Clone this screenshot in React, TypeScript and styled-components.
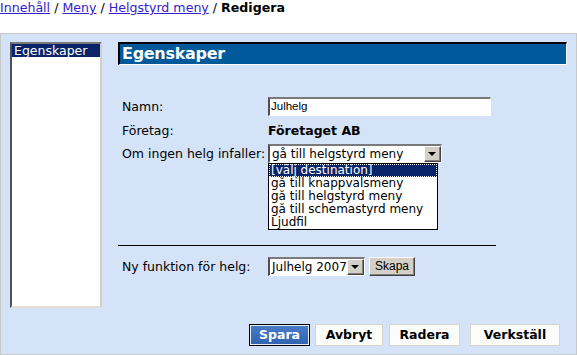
import React from "react";
import styled, { createGlobalStyle } from "styled-components";

const Global = createGlobalStyle`
  html, body { margin: 0; padding: 0; background: #ffffff; }
  body { font-family: "DejaVu Sans", Verdana, sans-serif; font-size: 12.5px; color: #000; }
`;

const Page = styled.div`
  width: 577px;
  height: 355px;
  overflow: hidden;
`;

const Crumbs = styled.div`
  height: 33px;
  line-height: 16px;
  font-size: 12.6px;
  white-space: nowrap;
`;

const Link = styled.a`
  color: #3322cc;
  text-decoration: underline;
`;

const Sep = styled.span`
  color: #000;
`;

const Current = styled.b`
  font-weight: bold;
`;

const Panel = styled.div`
  box-sizing: border-box;
  width: 577px;
  height: 322px;
  background: #d4e3f8;
  border: 1px solid #c8c8c8;
  display: flex;
  padding: 8px 9px 0 9px;
  position: relative;
`;

const ListBox = styled.div`
  box-sizing: border-box;
  width: 92px;
  height: 266px;
  background: #fff;
  border-top: 2px solid #7a7a7a;
  border-left: 2px solid #505050;
  border-right: 2px solid #d4d0c8;
  border-bottom: 2px solid #e4e0d8;
  flex: none;
`;

const ListItem = styled.div<{ $selected?: boolean }>`
  height: 13px;
  line-height: 13px;
  padding-left: 2px;
  font-size: 12.5px;
  color: ${(p) => (p.$selected ? "#fff" : "#000")};
  background: ${(p) => (p.$selected ? "#0a246a" : "transparent")};
`;

const Main = styled.div`
  margin-left: 16px;
  width: 450px;
  display: flex;
  flex-direction: column;
  position: relative;
`;

const Header = styled.div`
  box-sizing: border-box;
  height: 23px;
  background: #00599a;
  border-top: 2px solid #000;
  border-left: 2px solid #000;
  border-right: 1px solid #fff;
  border-bottom: 1px solid #fff;
  color: #fff;
  font-weight: bold;
  font-size: 16px;
  letter-spacing: -0.3px;
  line-height: 19px;
  padding-left: 2px;
`;

const Form = styled.div`
  margin-top: 32px;
  display: grid;
  grid-template-columns: 146px 1fr;
  padding-left: 4px;
  position: relative;
`;

const Label = styled.div<{ $h: number }>`
  height: ${(p) => p.$h}px;
  display: flex;
  align-items: center;
  white-space: nowrap;
`;

const Cell = styled.div<{ $h: number }>`
  height: ${(p) => p.$h}px;
  display: flex;
  align-items: center;
  position: relative;
`;

const TextInput = styled.div`
  box-sizing: border-box;
  width: 223px;
  height: 19px;
  background: #fff;
  border-top: 2px solid #7a7a7a;
  border-left: 2px solid #505050;
  border-right: 1px solid #fff;
  border-bottom: 1px solid #fff;
  font-family: "Liberation Sans", Arial, sans-serif;
  font-size: 11.5px;
  line-height: 15px;
  padding-left: 1px;
`;

const Strong = styled.span`
  font-weight: bold;
`;

const Select = styled.div<{ $w: number }>`
  box-sizing: border-box;
  width: ${(p) => p.$w}px;
  height: 19px;
  background: #fff;
  border-top: 2px solid #7a7a7a;
  border-left: 2px solid #505050;
  border-right: 1px solid #fff;
  border-bottom: 1px solid #fff;
  display: flex;
  align-items: stretch;
`;

const SelectText = styled.div`
  flex: 1;
  font-size: 12px;
  line-height: 16px;
  padding-left: 2px;
  white-space: nowrap;
  overflow: hidden;
`;

const Arrow = styled.div`
  box-sizing: border-box;
  flex: none;
  width: 17px;
  background: #d4d0c8;
  border-top: 1px solid #fff;
  border-left: 1px solid #fff;
  border-right: 1px solid #404040;
  border-bottom: 1px solid #404040;
  box-shadow: inset -1px -1px 0 #808080;
  display: flex;
  align-items: center;
  justify-content: center;
`;

const Tri = styled.div`
  width: 0;
  height: 0;
  border-left: 4px solid transparent;
  border-right: 4px solid transparent;
  border-top: 4px solid #000;
  margin-left: -1px;
`;

const DropList = styled.div`
  position: absolute;
  left: 0;
  top: 19px;
  box-sizing: border-box;
  width: 170px;
  height: 67px;
  background: #fff;
  border: 1px solid #000;
  z-index: 5;
  overflow: hidden;
`;

const DropItem = styled.div<{ $sel?: boolean }>`
  box-sizing: border-box;
  height: 13px;
  font-size: 12px;
  line-height: 13px;
  padding-left: 2px;
  white-space: nowrap;
  overflow: hidden;
  color: ${(p) => (p.$sel ? "#fff" : "#000")};
  background: ${(p) => (p.$sel ? "#0a246a" : "#fff")};
  outline: ${(p) => (p.$sel ? "1px dotted #ffffff" : "none")};
  outline-offset: -1px;
`;

const Rule = styled.div`
  margin-top: 82px;
  width: 378px;
  height: 1px;
  background: #000;
`;

const NewRow = styled.div`
  margin-top: 11px;
  display: flex;
  align-items: center;
  padding-left: 4px;
`;

const NewLabel = styled.div`
  width: 146px;
  white-space: nowrap;
`;

const SmallButton = styled.div`
  box-sizing: border-box;
  margin-left: 4px;
  height: 19px;
  width: 46px;
  background: #d4d0c8;
  border-top: 1px solid #fff;
  border-left: 1px solid #fff;
  border-right: 1px solid #404040;
  border-bottom: 1px solid #404040;
  box-shadow: inset -1px -1px 0 #808080;
  font-family: "Liberation Sans", Arial, sans-serif;
  font-size: 12px;
  line-height: 16px;
  text-align: center;
`;

const Actions = styled.div`
  position: absolute;
  left: 248px;
  top: 290px;
  display: flex;
`;

const ActionButton = styled.div<{ $w: number; $gap: number; $primary?: boolean }>`
  box-sizing: border-box;
  width: ${(p) => p.$w}px;
  height: 22px;
  margin-left: ${(p) => p.$gap}px;
  font-weight: bold;
  font-size: 12.5px;
  line-height: 19px;
  text-align: center;
  color: ${(p) => (p.$primary ? "#fff" : "#000")};
  background: ${(p) =>
    p.$primary ? "linear-gradient(#4a7cc8, #2f62b0)" : "#fcfcfa"};
  border: ${(p) => (p.$primary ? "1px solid #000" : "1px solid #d8d4cc")};
  box-shadow: ${(p) => (p.$primary ? "inset 0 0 0 1px #e8eef8" : "none")};
`;

export default function App() {
  return (
    <Page>
      <Global />
      <Crumbs>
        <Link>Innehåll</Link> <Sep>/</Sep> <Link>Meny</Link> <Sep>/</Sep>{" "}
        <Link>Helgstyrd meny</Link> <Sep>/</Sep> <Current>Redigera</Current>
      </Crumbs>
      <Panel>
        <ListBox>
          <ListItem $selected>Egenskaper</ListItem>
        </ListBox>
        <Main>
          <Header>Egenskaper</Header>
          <Form>
            <Label $h={19}>Namn:</Label>
            <Cell $h={19}>
              <TextInput>Julhelg</TextInput>
            </Cell>
            <Label $h={28}>Företag:</Label>
            <Cell $h={28}>
              <Strong>Företaget AB</Strong>
            </Cell>
            <Label $h={19}>Om ingen helg infaller:</Label>
            <Cell $h={19}>
              <Select $w={174}>
                <SelectText>gå till helgstyrd meny</SelectText>
                <Arrow>
                  <Tri />
                </Arrow>
              </Select>
              <DropList>
                <DropItem $sel>[välj destination]</DropItem>
                <DropItem>gå till knappvalsmeny</DropItem>
                <DropItem>gå till helgstyrd meny</DropItem>
                <DropItem>gå till schemastyrd meny</DropItem>
                <DropItem>Ljudfil</DropItem>
              </DropList>
            </Cell>
          </Form>
          <Rule />
          <NewRow>
            <NewLabel>Ny funktion för helg:</NewLabel>
            <Select $w={97}>
              <SelectText>Julhelg 2007</SelectText>
              <Arrow>
                <Tri />
              </Arrow>
            </Select>
            <SmallButton>Skapa</SmallButton>
          </NewRow>
        </Main>
        <Actions>
          <ActionButton $w={61} $gap={0} $primary>Spara</ActionButton>
          <ActionButton $w={68} $gap={5}>Avbryt</ActionButton>
          <ActionButton $w={71} $gap={6}>Radera</ActionButton>
          <ActionButton $w={90} $gap={10}>Verkställ</ActionButton>
        </Actions>
      </Panel>
    </Page>
  );
}
